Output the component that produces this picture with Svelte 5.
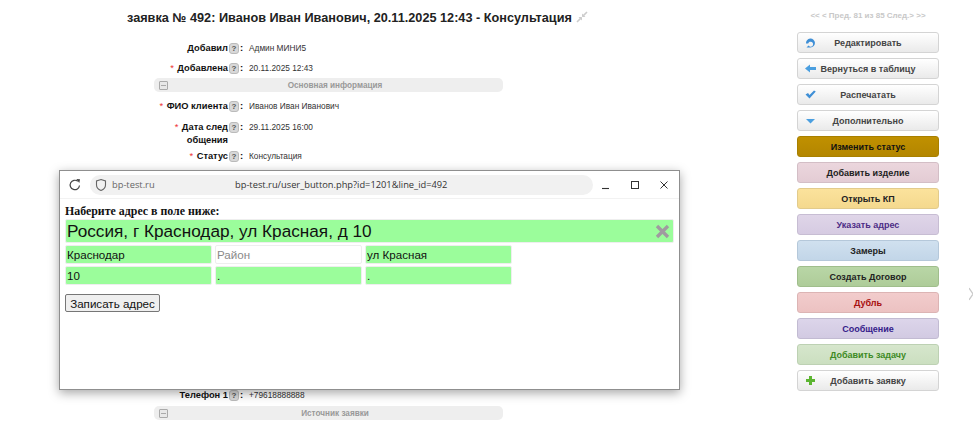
<script lang="ts">
  type Row = { label: string; value: string; required?: boolean; second?: string };

  const topRows: Row[] = [
    { label: 'Добавил', value: 'Админ МИНИ5' },
    { label: 'Добавлена', value: '20.11.2025 12:43', required: true }
  ];
  const mainRows: Row[] = [
    { label: 'ФИО клиента', value: 'Иванов Иван Иванович', required: true },
    { label: 'Дата след', second: 'общения', value: '29.11.2025 16:00', required: true },
    { label: 'Статус', value: 'Консультация', required: true }
  ];

  const actions = [
    { text: 'Редактировать', kind: 'plain', icon: 'edit' },
    { text: 'Вернуться в таблицу', kind: 'plain', icon: 'back' },
    { text: 'Распечатать', kind: 'plain', icon: 'check' },
    { text: 'Дополнительно', kind: 'plain', icon: 'down' },
    { text: 'Изменить статус', kind: 'gold' },
    { text: 'Добавить изделие', kind: 'pink' },
    { text: 'Открыть КП', kind: 'yellow' },
    { text: 'Указать адрес', kind: 'lilac' },
    { text: 'Замеры', kind: 'blue' },
    { text: 'Создать Договор', kind: 'green' },
    { text: 'Дубль', kind: 'red' },
    { text: 'Сообщение', kind: 'violet' },
    { text: 'Добавить задачу', kind: 'mint' },
    { text: 'Добавить заявку', kind: 'plain', icon: 'plus' }
  ];
</script>

{#snippet field(row: Row)}
  <div class="row" class:tall={row.second}>
    <div class="label">
      {#if row.required}<span class="req">*</span>{/if}
      {row.label}{#if row.second}<br />{row.second}{/if}
    </div>
    <span class="help">?</span>
    <span class="colon">:</span>
    <span class="value">{row.value}</span>
  </div>
{/snippet}

{#snippet section(title: string)}
  <div class="section">
    <span class="toggle"></span>
    <span class="section-title">{title}</span>
  </div>
{/snippet}

<div class="page">
  <main class="content">
    <h1 class="title">
      заявка № 492: Иванов Иван Иванович, 20.11.2025 12:43 - Консультация
      <svg class="pin" width="12" height="12" viewBox="0 0 12 12">
        <path d="M11 1 7.5 4.5M4.5 7.5 1 11" stroke="#ccc" stroke-width="1.6" fill="none" />
        <path d="M6 2.5 9.5 6 6.5 6 6 5.500ZM2.500 6 6 9.500 6 6.500 5.500 6Z" fill="#ccc" />
      </svg>
    </h1>

    <div class="form">
      <div class="group top">
        {#each topRows as row}{@render field(row)}{/each}
      </div>
      {@render section('Основная информация')}
      <div class="group main-info">
        {#each mainRows as row}{@render field(row)}{/each}
      </div>
      <div class="covered"></div>
      {@render field({ label: 'Телефон 1', value: '+79618888888' })}
      {@render section('Источник заявки')}
    </div>
  </main>

  <aside class="side">
    <div class="pager">&lt;&lt; &lt; Пред. 81 из 85 След.&gt; &gt;&gt;</div>
    <div class="actions">
      {#each actions as a}
        <button class="action {a.kind}" type="button">
          {#if a.icon === 'edit'}
            <svg class="ic" width="13" height="13" viewBox="0 0 13 13">
              <path d="M2 7.500A4.500 4.500 0 1 1 6.500 11.500L2.500 11.500 4.500 9.500A2.500 2.500 0 1 0 4.200 7.500Z" fill="#3f8fd6" />
            </svg>
          {:else if a.icon === 'back'}
            <svg class="ic" width="13" height="13" viewBox="0 0 13 13">
              <path d="M1 6.500 6 2.500V5H12V8H6V10.500Z" fill="#4b9fe0" />
            </svg>
          {:else if a.icon === 'check'}
            <svg class="ic" width="13" height="13" viewBox="0 0 13 13">
              <path d="M1.500 6.500 4 5 5.500 7 10 2.500 11.800 3.500 5.500 10.500Z" fill="#3f8fd6" />
            </svg>
          {:else if a.icon === 'down'}
            <svg class="ic" width="13" height="13" viewBox="0 0 13 13">
              <path d="M2 5H11L6.500 9.500Z" fill="#4b9fe0" />
            </svg>
          {:else if a.icon === 'plus'}
            <svg class="ic" width="13" height="13" viewBox="0 0 13 13">
              <path d="M5 2H8V5H11V8H8V11H5V8H2V5H5Z" fill="#5cb531" />
            </svg>
          {/if}
          {a.text}
        </button>
      {/each}
    </div>
  </aside>

  <svg class="edge-arrow" width="4" height="14" viewBox="0 0 4 14">
    <path d="M0 1 4 7 0 13" stroke="#c9c9c9" stroke-width="1.300" fill="none" />
  </svg>

  <section class="popup">
    <header class="chrome">
      <svg class="reload" width="14" height="14" viewBox="0 0 14 14">
        <path d="M11.500 7.500A4.700 4.700 0 1 1 9.800 3.300" stroke="#444" stroke-width="1.200" fill="none" />
        <path d="M8.300 1 12 1.200 11.300 5Z" fill="#444" />
      </svg>
      <div class="address">
        <svg width="12" height="14" viewBox="0 0 12 14">
          <path d="M6 1.500 10.500 3V7C10.500 9.500 8.500 11.500 6 12.500 3.500 11.500 1.500 9.500 1.500 7V3Z" stroke="#666" stroke-width="1.100" fill="none" />
        </svg>
        <span class="host">bp-test.ru</span>
        <span class="url">bp-test.ru/user_button.php?id=1201&amp;line_id=492</span>
      </div>
      <div class="win-controls">
        <svg width="12" height="12" viewBox="0 0 12 12"><path d="M2 9.500H9" stroke="#333" stroke-width="1.100" /></svg>
        <svg width="12" height="12" viewBox="0 0 12 12"><rect x="2.500" y="2.500" width="7" height="7" stroke="#333" fill="none" /></svg>
        <svg width="12" height="12" viewBox="0 0 12 12"><path d="M2.500 2.500 9.500 9.500M9.500 2.500 2.500 9.500" stroke="#333" /></svg>
      </div>
    </header>

    <div class="popup-body">
      <b class="prompt">Наберите адрес в поле ниже:</b>
      <div class="big-wrap">
        <input class="big filled" value="Россия, г Краснодар, ул Красная, д 10" />
        <svg class="clear" width="15" height="15" viewBox="0 0 15 15">
          <path d="M2 2 13 13M13 2 2 13" stroke="#a09aa0" stroke-width="3.400" />
        </svg>
      </div>
      <div class="parts">
        <input class="part filled" value="Краснодар" />
        <input class="part" placeholder="Район" />
        <input class="part filled" value="ул Красная" />
        <input class="part filled" value="10" />
        <input class="part filled" value="." />
        <input class="part filled" value="." />
      </div>
      <button class="save" type="button">Записать адрес</button>
    </div>
  </section>
</div>

<style>
  :global(body) {
    background: #fff;
    overflow: hidden;
  }

  .page {
    position: relative;
    display: flex;
    width: 973px;
    height: 424px;
    overflow: hidden;
    font-family: "Liberation Sans", Arial, sans-serif;
    color: #222;
  }

  .content {
    width: 797px;
    flex: none;
  }

  .title {
    margin: 10px 0 0 127px;
    font-size: 12.700px;
    line-height: 16px;
    font-weight: bold;
    color: #222;
    white-space: nowrap;
  }

  .pin {
    margin-left: 1px;
    vertical-align: -1px;
  }

  .form {
    margin-top: 16px;
    width: 504px;
  }

  .group {
    display: flex;
    flex-direction: column;
  }

  .group.top {
    gap: 7px;
    margin-bottom: 3px;
  }

  .group.main-info {
    gap: 8px;
    margin-top: 8px;
  }

  .row {
    display: flex;
    align-items: flex-start;
    font-size: 9px;
    line-height: 12px;
  }

  .row.tall {
    margin-bottom: -5px;
  }

  .label {
    width: 228px;
    flex: none;
    text-align: right;
    font-weight: bold;
    color: #111;
    font-size: 9.300px;
    line-height: 13px;
  }

  .req {
    color: #e33;
    font-weight: normal;
    margin-right: 1px;
  }

  .help {
    width: 10px;
    height: 11px;
    margin: 1px 0 0 1px;
    flex: none;
    border-radius: 3px;
    background: #d8d8d8;
    border: 1px solid #bbb;
    box-sizing: border-box;
    color: #555;
    font-size: 8px;
    line-height: 9px;
    font-weight: bold;
    text-align: center;
  }

  .colon {
    width: 10px;
    flex: none;
    padding-left: 1px;
    box-sizing: border-box;
    font-weight: bold;
    font-size: 9.500px;
    color: #111;
  }

  .value {
    color: #333;
    font-size: 8.300px;
    line-height: 12px;
  }

  .section {
    position: relative;
    display: flex;
    align-items: center;
    justify-content: center;
    height: 14px;
    margin-left: 154px;
    width: 349px;
    padding-left: 13px;
    box-sizing: border-box;
    border-radius: 5px;
    background: #eee;
  }

  .toggle {
    position: absolute;
    left: 5px;
    top: 3px;
    width: 7px;
    height: 7px;
    border: 1px solid #aaa;
    background: linear-gradient(#aaa, #aaa) center / 5px 1px no-repeat #e8e8e8;
    border-radius: 1px;
  }

  .section-title {
    font-size: 8.200px;
    font-weight: bold;
    color: #999;
  }

  .covered {
    height: 226px;
  }

  .form > .row {
    margin-bottom: 4px;
  }

  .side {
    width: 142px;
    flex: none;
  }

  .pager {
    margin-top: 11px;
    text-align: center;
    font-size: 8px;
    line-height: 9px;
    color: #c8c8c8;
    font-weight: bold;
  }

  .actions {
    display: flex;
    flex-direction: column;
    gap: 5px;
    margin-top: 12px;
  }

  .action {
    position: relative;
    display: block;
    width: 142px;
    height: 21px;
    padding: 0;
    box-sizing: border-box;
    border: 1px solid #d4d4d4;
    border-radius: 3px;
    font-family: inherit;
    font-size: 9px;
    font-weight: bold;
    color: #444;
    text-align: center;
    background: linear-gradient(#fff, #eaeaea);
  }

  .ic {
    position: absolute;
    left: 6px;
    top: 3px;
  }

  .gold { background: linear-gradient(#c09000, #b38600); border-color: #a88000; color: #111; }
  .pink { background: linear-gradient(#ebd6dd, #e3ccd4); border-color: #d3bec6; color: #222; }
  .yellow { background: linear-gradient(#fbe29c, #f4d98e); border-color: #e2cb8c; color: #222; }
  .lilac { background: linear-gradient(#dfd5e8, #d6cbe2); border-color: #c7bdd3; color: #4c2c85; }
  .blue { background: linear-gradient(#d0e0ef, #c2d6e8); border-color: #b5c8da; color: #222; }
  .green { background: linear-gradient(#b9d6a6, #aecc99); border-color: #a0be8c; color: #222; }
  .red { background: linear-gradient(#f2cccc, #ecc2c2); border-color: #dcb4b4; color: #a80f0f; }
  .violet { background: linear-gradient(#dcd5ea, #d2cae2); border-color: #c2bbd2; color: #35208a; }
  .mint { background: linear-gradient(#d6e6cc, #cbdfc0); border-color: #bdd1b3; color: #3e8a25; }

  .edge-arrow {
    position: absolute;
    left: 969px;
    top: 287px;
  }

  .popup {
    position: absolute;
    left: 59px;
    top: 170px;
    width: 621px;
    height: 220px;
    box-sizing: border-box;
    border: 1px solid #8f8f8f;
    background: #fff;
    box-shadow: 0 3px 10px rgba(0, 0, 0, 0.35);
  }

  .chrome {
    display: flex;
    align-items: center;
    height: 28px;
    padding: 0 10px 0 8px;
    border-bottom: 1px solid #f2f2f2;
    box-sizing: border-box;
  }

  .reload {
    flex: none;
  }

  .address {
    display: flex;
    align-items: center;
    width: 503px;
    height: 20px;
    margin-left: 8px;
    padding-left: 5px;
    box-sizing: border-box;
    border-radius: 10px;
    background: #f1f1f1;
    font-family: "Open Sans", sans-serif;
    font-size: 9.300px;
    flex: none;
  }

  .host {
    margin-left: 5px;
    width: 123px;
    flex: none;
    color: #666;
  }

  .url {
    color: #333;
  }

  .win-controls {
    display: flex;
    gap: 17px;
    margin-left: auto;
    margin-right: -1px;
  }

  .popup-body {
    display: flex;
    flex-direction: column;
    align-items: flex-start;
    padding: 5px 5px 0 5px;
  }

  .prompt {
    font-family: "Liberation Serif", serif;
    font-size: 11.900px;
    line-height: 15px;
    color: #111;
  }

  .big-wrap {
    position: relative;
    width: 609px;
  }

  input {
    display: block;
    box-sizing: border-box;
    margin: 0;
    border: 1px solid #eee;
    border-radius: 2px;
    font-family: "Liberation Sans", Arial, sans-serif;
    color: #111;
    outline: none;
    background: #fff;
  }

  input::placeholder {
    color: #8a8a8a;
    opacity: 1;
  }

  .filled {
    background: #9bfd9b;
  }

  .big {
    width: 100%;
    height: 24px;
    padding: 0 1px;
    font-size: 17.200px;
  }

  .clear {
    position: absolute;
    right: 4px;
    top: 5px;
  }

  .parts {
    display: grid;
    grid-template-columns: repeat(3, 147px);
    gap: 2px 3px;
    margin-top: 2px;
  }

  .part {
    width: 147px;
    height: 19px;
    padding: 0 1px;
    font-size: 11.600px;
  }

  .save {
    margin-top: 9px;
    height: 18px;
    width: 95px;
    padding: 0;
    box-sizing: border-box;
    border: 1px solid #767676;
    border-radius: 2px;
    background: #efefef;
    font-family: "Liberation Sans", Arial, sans-serif;
    font-size: 11.600px;
    color: #111;
  }
</style>
